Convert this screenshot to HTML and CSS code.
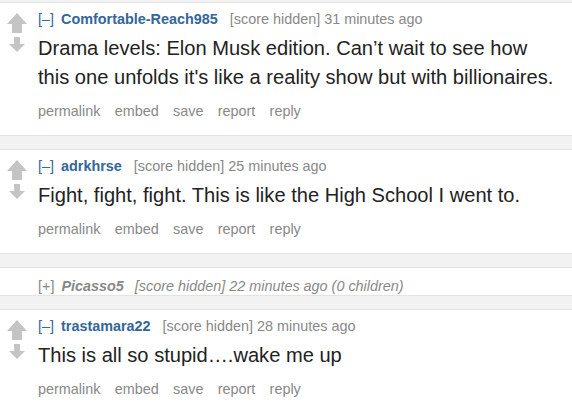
FILE: index.html
```html
<!DOCTYPE html>
<html>
<head>
<meta charset="utf-8">
<link rel="stylesheet" href="styles.css">
</head>
<body>
<div class="comment">
  <div class="midcol">
    <svg class="up" width="20" height="20" viewBox="0 0 20 20"><polygon points="10,0 20,11 15,11 15,20 5,20 5,11 0,11"/></svg>
    <svg class="down" width="16" height="15" viewBox="0 0 16 15"><polygon points="5,0 11,0 11,7 16,7 8,15 0,7 5,7"/></svg>
  </div>
  <div class="entry">
    <p class="tagline"><a class="expand">[–]</a><a class="author">Comfortable-Reach985</a><span class="score">[score hidden] 31 minutes ago</span></p>
    <div class="md">Drama levels: Elon Musk edition. Can’t wait to see how this one unfolds it's like a reality show but with billionaires.</div>
    <ul class="buttons"><li>permalink</li><li>embed</li><li>save</li><li>report</li><li>reply</li></ul>
  </div>
</div>
<div class="comment">
  <div class="midcol">
    <svg class="up" width="20" height="20" viewBox="0 0 20 20"><polygon points="10,0 20,11 15,11 15,20 5,20 5,11 0,11"/></svg>
    <svg class="down" width="16" height="15" viewBox="0 0 16 15"><polygon points="5,0 11,0 11,7 16,7 8,15 0,7 5,7"/></svg>
  </div>
  <div class="entry">
    <p class="tagline"><a class="expand">[–]</a><a class="author">adrkhrse</a><span class="score">[score hidden] 25 minutes ago</span></p>
    <div class="md">Fight, fight, fight. This is like the High School I went to.</div>
    <ul class="buttons"><li>permalink</li><li>embed</li><li>save</li><li>report</li><li>reply</li></ul>
  </div>
</div>
<div class="comment collapsed">
  <p class="tagline"><a class="expand">[+]</a><a class="author">Picasso5</a><span class="score">[score hidden] 22 minutes ago (0 children)</span></p>
</div>
<div class="comment">
  <div class="midcol">
    <svg class="up" width="20" height="20" viewBox="0 0 20 20"><polygon points="10,0 20,11 15,11 15,20 5,20 5,11 0,11"/></svg>
    <svg class="down" width="16" height="15" viewBox="0 0 16 15"><polygon points="5,0 11,0 11,7 16,7 8,15 0,7 5,7"/></svg>
  </div>
  <div class="entry">
    <p class="tagline"><a class="expand">[–]</a><a class="author">trastamara22</a><span class="score">[score hidden] 28 minutes ago</span></p>
    <div class="md">This is all so stupid….wake me up</div>
    <ul class="buttons"><li>permalink</li><li>embed</li><li>save</li><li>report</li><li>reply</li></ul>
  </div>
</div>
</body>
</html>
```
FILE: styles.css
```css
body {
  margin: 0;
  padding-top: 2px;
  background: #f2f2f2;
  font-family: "Liberation Sans", Arial, sans-serif;
}
.comment {
  display: flex;
  background: #fff;
  border-top: 1px solid #e3e3e3;
  border-bottom: 1px solid #e3e3e3;
  margin-bottom: 13px;
  padding: 6px 12px 14px 7px;
}
.midcol {
  width: 20px;
  margin-right: 11px;
  padding-top: 4px;
  display: flex;
  flex-direction: column;
  align-items: center;
  gap: 4px;
  flex: none;
}
.midcol svg { fill: #c4c4c4; display: block; }
.entry { flex: 1; min-width: 0; }
.tagline {
  margin: 0;
  font-size: 14.4px;
  line-height: 20px;
  white-space: nowrap;
}
.expand { color: #369; margin-right: 7px; }
.author { color: #369; font-weight: bold; margin-right: 12px; }
.score { color: #888; }
.md {
  margin-top: 5px;
  font-size: 20.1px;
  line-height: 29px;
  color: #222;
}
.buttons {
  display: flex;
  gap: 14.3px;
  list-style: none;
  margin: 9px 0 0;
  padding: 0;
  font-size: 14.4px;
  line-height: 20px;
  color: #888;
}
.collapsed { padding: 9px 12px 0 38px; }
.collapsed .tagline { line-height: 18px; }
.collapsed .expand { color: #888; }
.collapsed .author { color: #888; font-style: italic; margin-right: 11px; }
.collapsed .score { font-style: italic; }
```
